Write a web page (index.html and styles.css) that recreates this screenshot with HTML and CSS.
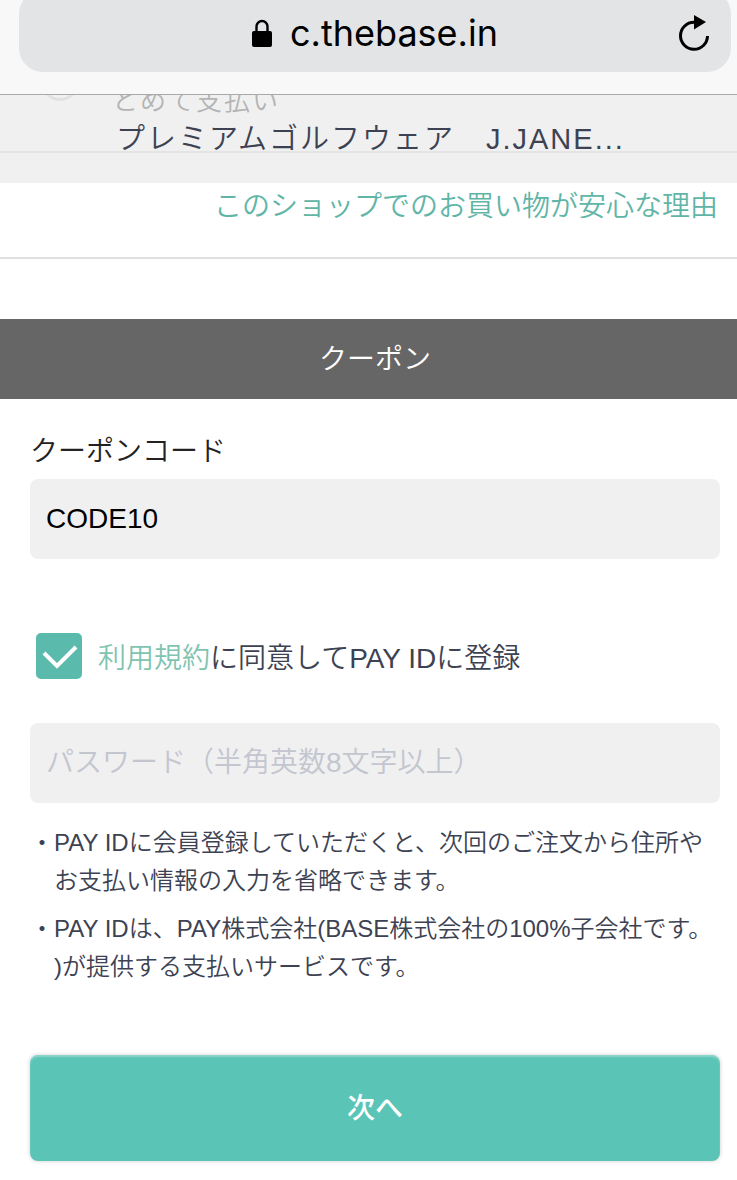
FILE: index.html
```html
<!DOCTYPE html>
<html lang="ja">
  <head>
    <meta charset="UTF-8" />
    <meta name="viewport" content="width=device-width, initial-scale=1.0" />
    <title>クーポン</title>
    <link rel="stylesheet" href="styles.css">
  </head>
  <body>
    <!-- Browser address bar -->
    <header class="browser-bar">
      <div class="address">
        <svg class="lock" viewBox="0 0 20 28" aria-hidden="true">
          <path d="M4.500 13V7.500a5.500 5.500 0 0 1 11 0V13" fill="none" stroke="#000" stroke-width="2.400" />
          <rect x="0" y="12" width="20" height="16" rx="2" />
        </svg>
        <span class="url">c.thebase.in</span>
        <button class="reload" type="button" aria-label="再読み込み">
          <svg viewBox="0 0 30 36" aria-hidden="true">
            <path d="M15 7.300A13.500 13.500 0 1 0 28.500 21" fill="none" stroke="#000" stroke-width="3" />
            <path d="M15 0L27 7L15 14.500Z" />
          </svg>
        </button>
      </div>
    </header>

    <main>
      <!-- Shop name over the payment option -->
      <div class="shop-bar">
        <label class="payment">
          <input class="payment-radio" type="radio" name="payment" disabled />
          <span>とめて支払い</span>
        </label>
        <p class="shop-name">プレミアムゴルフウェア　J.JANE...</p>
      </div>
      <div class="reason">
        <a href="#">このショップでのお買い物が安心な理由</a>
      </div>

      <!-- Coupon form -->
      <h2 class="section-title">クーポン</h2>
      <form class="form">
        <label class="field-label" for="coupon">クーポンコード</label>
        <input class="field" type="text" id="coupon" value="CODE10" />

        <div class="agree">
          <span class="check">
            <input type="checkbox" id="agree" checked />
            <svg viewBox="0 0 46 46" aria-hidden="true">
              <path d="M8 20L21 33L40 14" fill="none" stroke="#fff" stroke-width="4" />
            </svg>
          </span>
          <label for="agree"><a href="#">利用規約</a>に同意してPAY IDに登録</label>
        </div>

        <input class="field" type="password" id="password" aria-label="パスワード" placeholder="パスワード（半角英数8文字以上）" />

        <ul class="notes">
          <li>PAY IDに会員登録していただくと、次回のご注文から住所やお支払い情報の入力を省略できます。</li>
          <li>PAY IDは、PAY株式会社(BASE株式会社の100%子会社です。<br />)が提供する支払いサービスです。</li>
        </ul>

        <button class="next" type="button">次へ</button>
      </form>
    </main>
  </body>
</html>
```
FILE: styles.css
```css
/* Reset & Global Styles */
* {
  margin: 0;
  padding: 0;
  box-sizing: border-box;
}

body {
  background: #fff;
  color: #3d4252;
  font-family: "Liberation Sans", "Noto Sans CJK JP", sans-serif;
  font-size: 28px;
  font-weight: 350;
  line-height: 40px;
}

a {
  color: #5fb5a6;
  text-decoration: none;
}

/* Address bar */
.browser-bar {
  position: sticky;
  top: 0;
  z-index: 2;
  padding: 0 6px 22px 19px;
  background: #f8f8f8;
  border-bottom: 1px solid #a9a9ab;
  overflow: hidden;
}

.address {
  display: grid;
  grid-template-columns: 1fr auto auto 1fr;
  align-items: center;
  height: 82px;
  margin-top: -10px;
  padding: 4px 22px 0 22px;
  border-radius: 24px;
  background: #e3e4e6;
}

.lock {
  grid-column: 2;
  width: 20px;
  height: 28px;
  margin-right: 18px;
}

.url {
  color: #000;
  font-family: Inter, "Liberation Sans", sans-serif;
  font-size: 36px;
  font-weight: 400;
}

.reload {
  justify-self: end;
  border: none;
  background: none;
  cursor: pointer;
}

.reload svg {
  display: block;
  width: 30px;
  height: 36px;
}

/* Shop name bar */
.shop-bar {
  display: grid;
  padding-bottom: 30px;
  background: #f0f0f0;
  letter-spacing: 2px;
}

.payment,
.shop-name {
  grid-area: 1 / 1;
}

.payment {
  display: flex;
  align-items: flex-start;
  gap: 32px;
  height: 94px;
  margin-top: -36px;
  padding-left: 40px;
  border-bottom: 2px solid #e4e4e4;
  color: #b4b4b4;
  font-size: 26px;
}

.payment span {
  padding-top: 22px;
}

.payment-radio {
  appearance: none;
  width: 40px;
  height: 42px;
  border: 3px solid #e2e2e2;
  border-radius: 50%;
}

.shop-name {
  align-self: end;
  padding-left: 116px;
  font-size: 29px;
  line-height: 28px;
}

.reason {
  padding: 2px 19px 28px;
  border-bottom: 2px solid #e0e0e0;
  line-height: 44px;
  text-align: right;
}

/* Coupon form */
.section-title {
  margin-top: 60px;
  padding: 2px 0 0 13px;
  background: #666;
  color: #fff;
  font-size: 28px;
  font-weight: 350;
  line-height: 78px;
  text-align: center;
}

.form {
  padding: 33px 17px 19px 30px;
}

.field-label {
  display: block;
  margin-bottom: 7px;
  color: #222;
}

.field {
  display: block;
  width: 100%;
  height: 80px;
  padding: 0 16px;
  border: none;
  border-radius: 8px;
  background: #f0f0f0;
  color: #000;
  font: inherit;
  outline: none;
}

.field::placeholder {
  color: #c3c5cf;
  opacity: 1;
}

.agree {
  display: flex;
  align-items: center;
  gap: 16px;
  margin: 74px 0 44px;
  padding-left: 6px;
}

.agree label {
  padding-top: 6px;
}

.agree a {
  color: #7fc4b0;
}

.check {
  display: grid;
  width: 46px;
  height: 46px;
}

.check input,
.check svg {
  grid-area: 1 / 1;
  width: 46px;
  height: 46px;
}

.check input {
  appearance: none;
  border: 2px solid #5abbad;
  border-radius: 5px;
  background: #fff;
}

.check input:checked {
  background: #5abbad;
}

.check svg {
  pointer-events: none;
}

.notes {
  margin: 21px 0 69px;
  font-size: 24px;
  line-height: 38px;
  list-style: none;
}

.notes li {
  padding-left: 24px;
  text-indent: -24px;
}

.notes li::before {
  content: "・";
}

.notes li + li {
  margin-top: 10px;
}

.next {
  display: block;
  width: 100%;
  height: 106px;
  padding-bottom: 4px;
  border: none;
  border-radius: 8px;
  background: #5ac4b6;
  box-shadow: 0 0 4px rgba(0, 0, 0, 0.2), inset 0 2px 2px rgba(255, 255, 255, 0.3);
  color: #fff;
  font-family: inherit;
  font-size: 28px;
  font-weight: 500;
  cursor: pointer;
}
```
